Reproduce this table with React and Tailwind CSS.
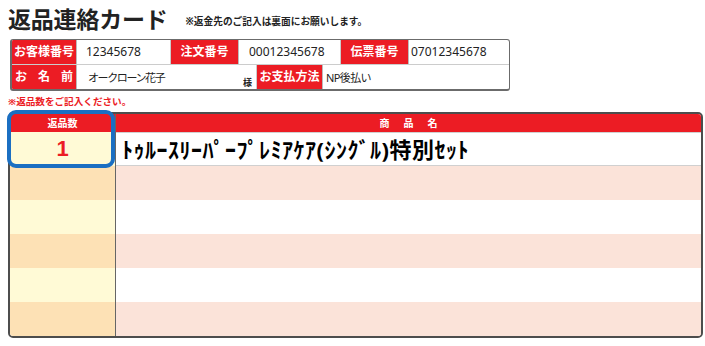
import React from 'react';

const RED = 'bg-[#ec1c24]';

const InfoLabel = ({ children, w, spread }) => (
  <div className={`${w} ${RED} h-full flex items-center ${spread ? 'justify-between px-[3px]' : 'justify-center'} text-white text-[12px] font-bold leading-none border-r border-[#bbb]`}>
    {children}
  </div>
);

const InfoValue = ({ children, w, pl }) => (
  <div className={`${w} ${pl} h-full flex items-center text-[12px] text-[#222] leading-none border-r border-[#ccc]`}>
    {children}
  </div>
);

const rows = [0, 1, 2, 3, 4, 5];

export default function App() {
  return (
    <div className="w-[705px] h-[346px] bg-white font-['Noto_Sans','Noto_Sans_CJK_JP',sans-serif] text-[#222]">
      {/* title */}
      <div className="h-[39px] flex items-center pl-[8px]">
        <h1 className="text-[23px] font-bold leading-none tracking-[-0.2px]">返品連絡カード</h1>
        <span className="ml-[18px] mt-[5px] text-[9.7px] font-bold leading-none">※返金先のご記入は裏面にお願いします。</span>
      </div>

      {/* customer info */}
      <div className="ml-[10px] w-[500px] h-[52px] border border-l-2 border-b-2 border-[#6b6b6b] rounded-[3px] overflow-hidden flex flex-col">
        <div className="h-[25px] flex border-b border-[#ccc]">
          <InfoLabel w="w-[65px]">お客様番号</InfoLabel>
          <InfoValue w="w-[94px]" pl="pl-[9px]">12345678</InfoValue>
          <InfoLabel w="w-[68px]">注文番号</InfoLabel>
          <InfoValue w="w-[102px]" pl="pl-[10px]">00012345678</InfoValue>
          <InfoLabel w="w-[68px]">伝票番号</InfoLabel>
          <div className="flex-1 h-full flex items-center pl-[2px] text-[12px] leading-none">07012345678</div>
        </div>
        <div className="flex-1 flex">
          <InfoLabel w="w-[65px]" spread>
            <span>お</span><span>名</span><span>前</span>
          </InfoLabel>
          <div className="w-[180px] h-full flex items-center pl-[11px] pr-[4px] border-r border-[#ccc]">
            <span className="text-[11px] tracking-[-1.4px] leading-none">オークローン花子</span>
            <span className="ml-auto mt-[10px] text-[9px] font-bold leading-none">様</span>
          </div>
          <InfoLabel w="w-[66px]">お支払方法</InfoLabel>
          <div className="flex-1 h-full flex items-center pl-[3px] text-[11px] tracking-[-0.6px] leading-none">NP後払い</div>
        </div>
      </div>

      {/* note */}
      <div className="h-[21px] flex items-center pl-[8px] pt-[1px]">
        <span className="text-[9.6px] font-bold text-[#ec1c24] leading-none">※返品数をご記入ください。</span>
      </div>

      {/* returns table */}
      <div className="relative ml-[8px] w-[695px]">
        <div className="border-2 border-[#4d4d4d] rounded-[5px] overflow-hidden flex">
          <div className="w-[106px] border-r border-[#666] flex flex-col">
            <div className={`h-[18px] ${RED} flex items-center justify-center text-white text-[10px] font-bold leading-none`}>返品数</div>
            {rows.map(i => (
              <div key={i} className={`h-[34px] flex items-center justify-center ${i % 2 === 0 ? 'bg-[#fffad6]' : 'bg-[#fde1b5]'}`}>
                {i === 0 && <span className="font-['Liberation_Sans',sans-serif] text-[22px] font-bold text-[#ec1c24] leading-none">1</span>}
              </div>
            ))}
          </div>
          <div className="flex-1 flex flex-col">
            <div className={`h-[18px] ${RED} flex items-center justify-center text-white text-[10px] font-bold leading-none pl-[14px] tracking-[14px]`}>商品名</div>
            {rows.map(i => (
              <div key={i} className={`h-[34px] flex items-center ${i % 2 === 0 ? 'bg-white' : 'bg-[#fbe3d9]'} ${i === 0 ? 'border-y border-[#d0d0d0]' : ''}`}>
                {i === 0 && (
                  <span className="pl-[6px] text-[22px] font-bold leading-none tracking-[0.5px] text-black">ﾄｩﾙｰｽﾘｰﾊﾟｰﾌﾟﾚﾐｱｹｱ(ｼﾝｸﾞﾙ)特別ｾｯﾄ</span>
                )}
              </div>
            ))}
          </div>
        </div>
        <div className="absolute left-[-1px] top-[-2px] w-[108px] h-[58px] border-4 border-[#1b6fc2] rounded-[9px] pointer-events-none" />
      </div>
    </div>
  );
}
